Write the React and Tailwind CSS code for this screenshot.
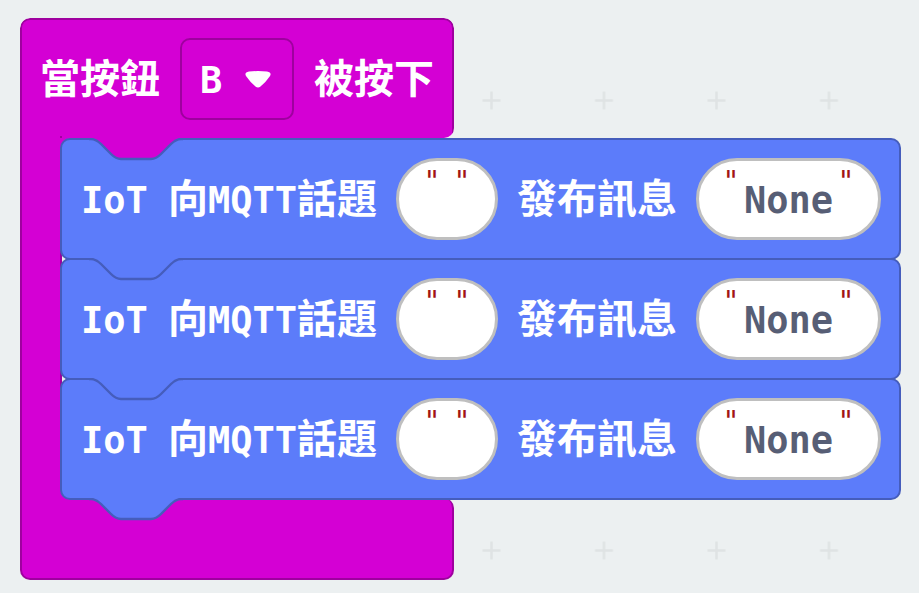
import React, { useId } from "react";

const NOTCH =
  "c5 0 7.5 2.5 10 5 l10 10 c2.5 2.5 5 5 10 5 h30 c5 0 7.5 -2.5 10 -5 l10 -10 c2.5 -2.5 5 -5 10 -5";

/* Puzzle connector; its fill hides the straight edge that it replaces. */
function Notch({ className }) {
  return (
    <svg
      aria-hidden="true"
      viewBox="0 0 96 24"
      className={"pointer-events-none absolute z-10 h-6 w-24 " + className}
    >
      <path d={"M3 0 V1 " + NOTCH + " V0 Z"} fill="currentColor" />
      <path d={"M1 1 H3 " + NOTCH + " H95"} fill="none" stroke="#455dbc" strokeWidth="2.4" />
    </svg>
  );
}

function Latin({ children }) {
  return <span className="font-['DejaVu_Sans_Mono',monospace] text-[37px]">{children}</span>;
}

function StringField({ id, value, width, inputWidth }) {
  const quote =
    "flex w-3 shrink-0 justify-center font-['DejaVu_Sans_Mono',monospace] text-[28px] font-normal leading-[42px] text-[#a31515]";
  return (
    <span
      className={
        "flex h-[82px] shrink-0 justify-center rounded-full border-[3px] border-[#bfbfbf] bg-white " + width
      }
    >
      <span className={quote}>"</span>
      <input
        id={id}
        type="text"
        defaultValue={value}
        spellCheck={false}
        className={
          "h-full bg-transparent pt-0.5 text-center font-['DejaVu_Sans_Mono',monospace] text-[37px] font-bold text-[#575e75] outline-none " +
          inputWidth
        }
      />
      <span className={quote}>"</span>
    </span>
  );
}

function PublishBlock({ topic, message, first, last }) {
  const id = useId();
  return (
    <div className="relative -mb-0.5 flex h-[122px] items-center gap-[19px] rounded-[10px] border-2 border-[#455dbc] bg-[#5c7cfa] pl-[19px] pr-[18px]">
      <Notch className={first ? "left-[26px] -top-0.5 text-[#d400d4]" : "left-[26px] -top-0.5 text-[#5c7cfa]"} />
      <label
        htmlFor={id + "topic"}
        className="flex w-[296px] shrink-0 items-baseline justify-between whitespace-nowrap pb-0.5"
      >
        <Latin>IoT</Latin>
        <span>
          向<Latin>MQTT</Latin>話題
        </span>
      </label>
      <StringField id={id + "topic"} value={topic} width="w-[102px]" inputWidth="w-[18px]" />
      <label htmlFor={id + "message"} className="w-40 shrink-0 whitespace-nowrap pb-1.5">
        發布訊息
      </label>
      <StringField id={id + "message"} value={message} width="w-[185px]" inputWidth="w-[103px]" />
      {last && <Notch className="left-[26px] top-[118px] text-[#5c7cfa]" />}
    </div>
  );
}

export default function App() {
  const blocks = [
    { topic: "", message: "None" },
    { topic: "", message: "None" },
    { topic: "", message: "None" },
  ];
  return (
    <main className="relative isolate min-h-screen overflow-hidden bg-[#ecf0f1] pl-5 pt-[18px] font-['Noto_Sans_CJK_TC',sans-serif] text-[40px] font-bold leading-[60px] text-white">
      <svg aria-hidden="true" className="absolute inset-0 -z-10 h-full w-full">
        <defs>
          <pattern id="grid" x="41.5" y="100.5" width="112.5" height="112.5" patternUnits="userSpaceOnUse" patternTransform="translate(-56.25 -56.25)">
            <path d="M47.25 56.25 h18 M56.25 47.25 v18" stroke="#dfe3e4" strokeWidth="2.5" />
          </pattern>
        </defs>
        <rect width="100%" height="100%" fill="url(#grid)" />
      </svg>

      <div className="w-fit">
        <div className="flex h-[122px] w-[434px] items-center gap-5 rounded-t-[10px] border-2 border-b-0 border-[#9f009f] bg-[#d400d4] px-[18px] pb-0.5 [clip-path:inset(0_0_2px_0_round_10px_10px_10px_0)]">
          <label htmlFor="button-name" className="w-[120px] shrink-0 whitespace-nowrap pb-1.5">
            當按鈕
          </label>
          <div className="relative h-[82px] w-[114px] shrink-0">
            <select
              id="button-name"
              defaultValue="B"
              className="h-full w-full appearance-none rounded-[10px] border-2 border-[#9f009f] bg-transparent pl-[18px] pt-1 font-['DejaVu_Sans_Mono',monospace] text-[37px] font-bold text-white outline-none"
            >
              <option>A</option>
              <option>B</option>
              <option>A+B</option>
            </select>
            <svg aria-hidden="true" viewBox="0 0 26 17" className="pointer-events-none absolute right-[23px] top-[33px] h-[17px] w-[26px]">
              <path d="M4 .5 Q13 -.3 22 .5 Q27 1.5 25 5 Q21 11 15.5 15.5 Q13 17.5 10.5 15.5 Q5 11 1 5 Q-1 1.5 4 .5Z" fill="white" />
            </svg>
          </div>
          <span className="shrink-0 whitespace-nowrap pb-1.5">被按下</span>
        </div>

        <div className="relative z-10 -mt-0.5 flex">
          <div className="-mt-0.5 w-[42px] shrink-0 border-l-2 border-r-2 border-[#9f009f] bg-[#d400d4]" />
          <div className="-ml-0.5 bg-[linear-gradient(#d400d4,#d400d4),linear-gradient(#d400d4,#d400d4)] bg-[length:12px_12px] bg-[position:left_top,left_bottom] bg-no-repeat pb-0.5">
            {blocks.map((block, i) => (
              <PublishBlock key={i} {...block} first={i === 0} last={i === blocks.length - 1} />
            ))}
          </div>
        </div>

        <div className="-mt-0.5 h-[82px] w-[434px] rounded-b-[10px] rounded-tr-[10px] border-2 border-t-0 border-[#9f009f] bg-[#d400d4]" />
      </div>
    </main>
  );
}
